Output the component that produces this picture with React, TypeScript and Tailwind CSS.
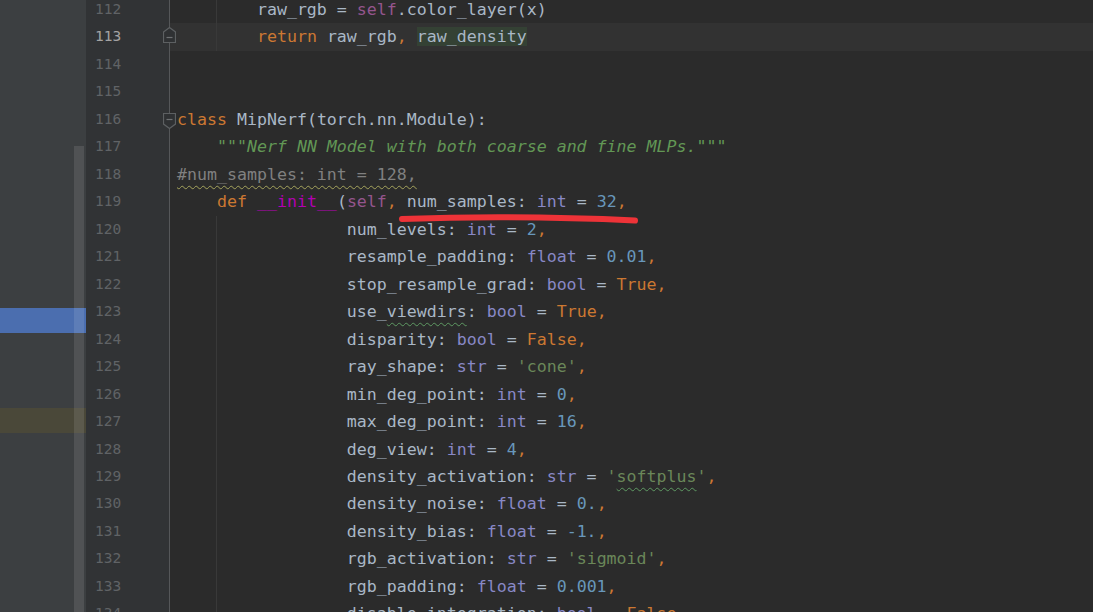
import React from 'react';

type Tok = [string, string];

const c = {
  id: 'text-[#a9b7c6]',
  kw: 'text-[#cc7832]',
  self: 'text-[#94558d]',
  magic: 'text-[#b200b2]',
  type: 'text-[#8888c6]',
  num: 'text-[#6897bb]',
  str: 'text-[#6a8759]',
  doc: 'text-[#629755] italic',
  cmt: 'text-[#808080] underline decoration-wavy decoration-[#a5a35c] decoration-1 underline-offset-[5px]',
  hl: 'text-[#a9b7c6] bg-[#344134]',
  typo: 'underline decoration-wavy decoration-[#5e9a63] decoration-1 underline-offset-[5px]',
};

const pad = '                 ';

const param = (name: string, type: string, value: Tok[]): Tok[] => [
  [pad + name + ': ', c.id],
  [type, c.type],
  [' = ', c.id],
  ...value,
  [',', c.kw],
];

const lines: { n: number; toks: Tok[]; current?: boolean; fold?: 'start' | 'end'; guide?: boolean }[] = [
  { n: 112, guide: true, toks: [['        raw_rgb = ', c.id], ['self', c.self], ['.color_layer(x)', c.id]] },
  {
    n: 113,
    current: true,
    fold: 'end',
    guide: true,
    toks: [['        ', c.id], ['return ', c.kw], ['raw_rgb', c.id], [', ', c.kw], ['raw_density', c.hl]],
  },
  { n: 114, toks: [] },
  { n: 115, toks: [] },
  { n: 116, fold: 'start', toks: [['class ', c.kw], ['MipNerf(torch.nn.Module):', c.id]] },
  { n: 117, toks: [['    ', c.id], ['"""Nerf NN Model with both coarse and fine MLPs."""', c.doc]] },
  { n: 118, toks: [['#num_samples: int = 128,', c.cmt]] },
  {
    n: 119,
    toks: [
      ['    ', c.id],
      ['def ', c.kw],
      ['__init__', c.magic],
      ['(', c.id],
      ['self', c.self],
      [', ', c.kw],
      ['num_samples: ', c.id],
      ['int', c.type],
      [' = ', c.id],
      ['32', c.num],
      [',', c.kw],
    ],
  },
  { n: 120, guide: true, toks: param('num_levels', 'int', [['2', c.num]]) },
  { n: 121, guide: true, toks: param('resample_padding', 'float', [['0.01', c.num]]) },
  { n: 122, guide: true, toks: param('stop_resample_grad', 'bool', [['True', c.kw]]) },
  {
    n: 123,
    guide: true,
    toks: [
      [pad + 'use_', c.id],
      ['viewdirs', c.id + ' ' + c.typo],
      [': ', c.id],
      ['bool', c.type],
      [' = ', c.id],
      ['True', c.kw],
      [',', c.kw],
    ],
  },
  { n: 124, guide: true, toks: param('disparity', 'bool', [['False', c.kw]]) },
  { n: 125, guide: true, toks: param('ray_shape', 'str', [["'cone'", c.str]]) },
  { n: 126, guide: true, toks: param('min_deg_point', 'int', [['0', c.num]]) },
  { n: 127, guide: true, toks: param('max_deg_point', 'int', [['16', c.num]]) },
  { n: 128, guide: true, toks: param('deg_view', 'int', [['4', c.num]]) },
  {
    n: 129,
    guide: true,
    toks: param('density_activation', 'str', [
      ["'", c.str],
      ['softplus', c.str + ' ' + c.typo],
      ["'", c.str],
    ]),
  },
  { n: 130, guide: true, toks: param('density_noise', 'float', [['0.', c.num]]) },
  { n: 131, guide: true, toks: param('density_bias', 'float', [['-1.', c.num]]) },
  { n: 132, guide: true, toks: param('rgb_activation', 'str', [["'sigmoid'", c.str]]) },
  { n: 133, guide: true, toks: param('rgb_padding', 'float', [['0.001', c.num]]) },
  { n: 134, guide: true, toks: param('disable_integration', 'bool', [['False', c.kw]]) },
];

function FoldMarker({ kind }: { kind: 'start' | 'end' }) {
  const pts = kind === 'end' ? '0.5,5 6.5,0.5 12.5,5 12.5,15.5 0.5,15.5' : '0.5,0.5 12.5,0.5 12.5,11 6.5,15.5 0.5,11';
  const y = kind === 'end' ? 10.5 : 6.5;
  return (
    <svg
      width="13"
      height="16"
      viewBox="0 0 13 16"
      className={`absolute left-[77px] ${kind === 'end' ? 'top-[4px]' : 'top-[7px]'}`}
    >
      <polygon points={pts} fill="#2f3133" stroke="#5d6062" strokeWidth="1.2" />
      <line x1="3.5" y1={y} x2="9.5" y2={y} stroke="#6e7173" strokeWidth="1.2" />
    </svg>
  );
}

export default function App() {
  return (
    <div className="relative flex h-[612px] w-[1093px] overflow-hidden bg-[#2b2b2b]">
      {/* project tree strip */}
      <div className="relative w-[86px] shrink-0 bg-[#3c3f41]">
        <div className="h-[308px]" />
        <div className="h-[25px] bg-[#4b6eaf]" />
        <div className="h-[75px]" />
        <div className="h-[25px] bg-[#4a4839]" />
        <div className="absolute left-[74px] top-[146px] bottom-0 w-[10px] bg-white/10" />
      </div>

      {/* gutter + editor */}
      <div className="flex flex-1 flex-col -mt-[4px] font-['DejaVu_Sans_Mono',monospace]">
        {lines.map((line) => (
          <div key={line.n} className="relative flex h-[27.47px] shrink-0">
            <div className="relative w-[84px] shrink-0 border-r border-[#555759] bg-[#313335] pl-[9px] text-[14.5px] leading-[27.47px]">
              <span className={line.current ? 'text-[#a4a3a3]' : 'text-[#606366]'}>{line.n}</span>
            </div>
            <div
              className={`relative flex-1 whitespace-pre pl-[7px] text-[16.6px] leading-[27.47px] ${
                line.current ? 'bg-[#323232]' : ''
              }`}
            >
              {line.guide && <span className="absolute left-[46px] top-0 h-full w-px bg-[#393939]" />}
              {line.toks.map(([t, cls], i) => (
                <span key={i} className={`relative ${cls}`}>
                  {t}
                </span>
              ))}
            </div>
            {line.fold && <FoldMarker kind={line.fold} />}
          </div>
        ))}
      </div>

      {/* red pen annotation */}
      <svg width="244" height="16" viewBox="0 0 244 16" className="pointer-events-none absolute left-[397px] top-[211px]">
        <path d="M5 8 Q 118 4 238 9.5" fill="none" stroke="#ee3338" strokeWidth="6" strokeLinecap="round" />
      </svg>
    </div>
  );
}
